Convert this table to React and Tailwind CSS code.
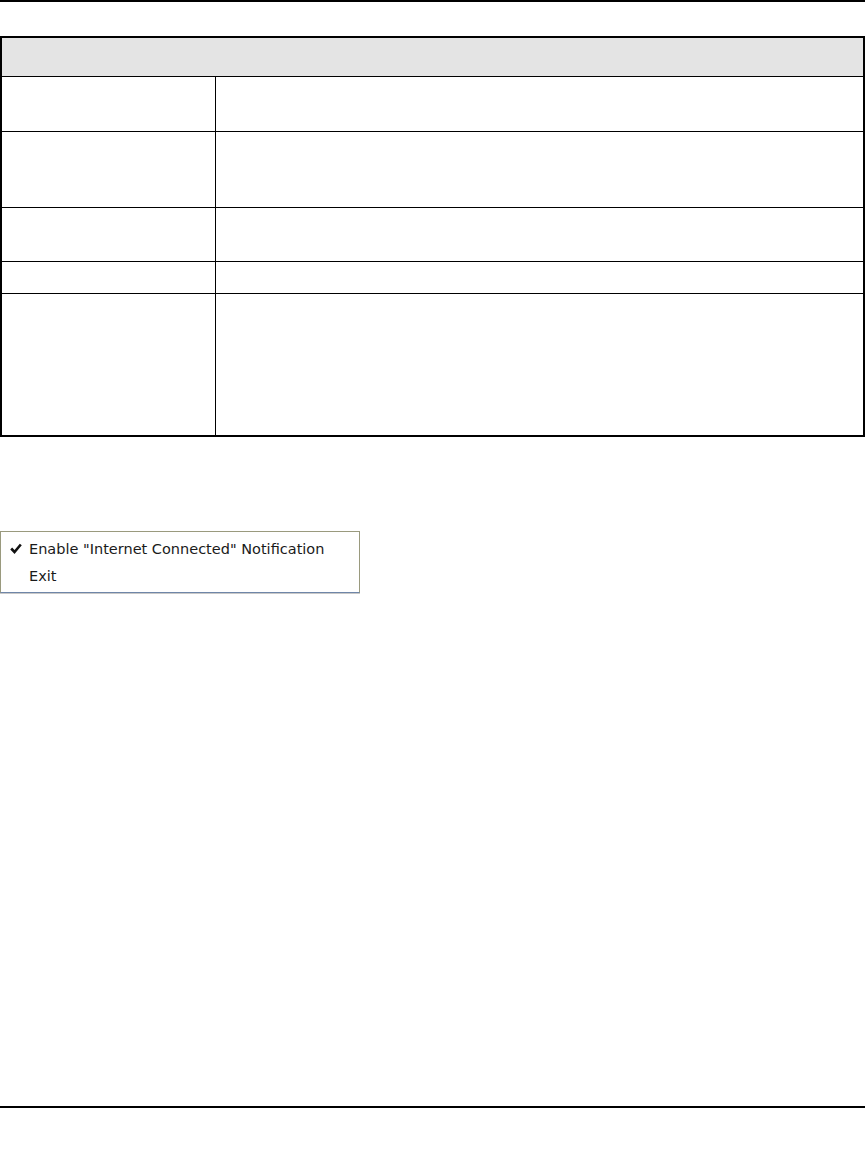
const rows = [
  { h: 'h-[55px]' },
  { h: 'h-[76px]' },
  { h: 'h-[54px]' },
  { h: 'h-[32px]' },
  { h: 'h-[141px]' },
];

const App = () => {
    return (
        <div className="w-[865px] h-[1170px] bg-white flex flex-col" style={{ fontFamily: 'Tahoma, "DejaVu Sans", sans-serif' }}>
            {/* Page header rule */}
            <div className="h-[2px] bg-black w-full" />

            {/* Table */}
            <div className="mt-[34px] w-[865px] border-2 border-black">
                <div className="h-[39px] bg-[#e4e4e4] border-b border-black" />
                {rows.map((row, i) => (
                    <div
                        key={i}
                        className={`flex ${row.h} ${i < rows.length - 1 ? 'border-b border-black' : ''}`}
                    >
                        <div className="w-[214px] shrink-0 border-r border-black" />
                        <div className="flex-1" />
                    </div>
                ))}
            </div>

            {/* Context menu screenshot */}
            <div className="mt-[94px] w-[360px] h-[62px] bg-white border border-[#9a9a7e] border-b-[#6f86a8] shadow-[0_1px_0_#c8c8c8] flex flex-col justify-center gap-[5px] text-[14.5px] leading-[22px] text-[#1a1a1a]">
                <div className="flex items-center">
                    <span className="w-[28px] flex justify-center pl-[1px]">
                        <svg width="12" height="11" viewBox="0 0 12 11">
                            <path d="M1.2 5.5 L4.5 9 L10.8 1.5" fill="none" stroke="#111" strokeWidth="2.6" />
                        </svg>
                    </span>
                    <span>Enable "Internet Connected" Notification</span>
                </div>
                <div className="flex items-center">
                    <span className="w-[28px]" />
                    <span>Exit</span>
                </div>
            </div>

            <div className="flex-1" />

            {/* Page footer rule */}
            <div className="h-[2px] bg-black w-full mb-[62px]" />
        </div>
    );
};

export default App;
